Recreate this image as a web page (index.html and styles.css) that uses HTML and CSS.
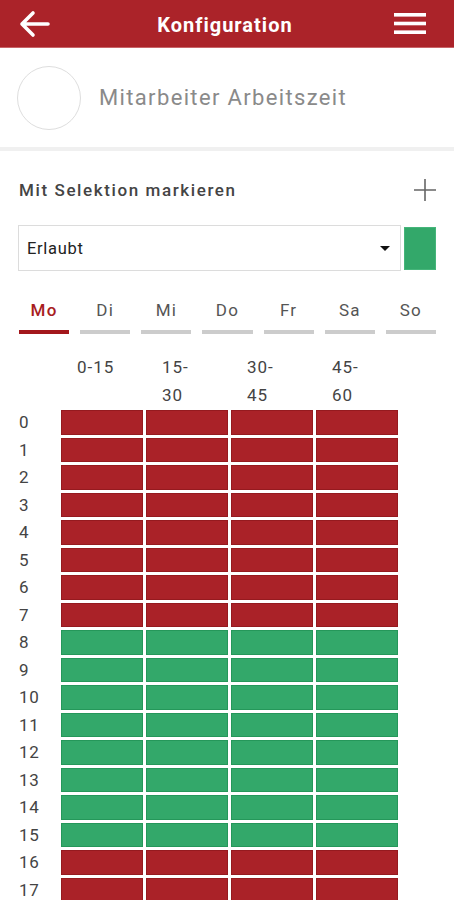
FILE: index.html
```html
<!DOCTYPE html>
<html lang="de">
<head>
    <meta charset="UTF-8">
    <meta name="viewport" content="width=device-width, initial-scale=1.0">
    <title>Konfiguration</title>
    <link rel="stylesheet" href="styles.css">
</head>
<body>
    <header class="topbar">
        <svg class="back" width="32" height="28" viewBox="0 0 32 28">
            <path d="M30 14H4M15 3L4 14l11 11" fill="none" stroke="#fff" stroke-width="3.6" stroke-linecap="round" stroke-linejoin="round"/>
        </svg>
        <h1 class="title">Konfiguration</h1>
        <svg class="menu" width="32" height="22" viewBox="0 0 32 22">
            <rect x="0" y="0" width="32" height="3.6" fill="#fff"/>
            <rect x="0" y="8.7" width="32" height="3.6" fill="#fff"/>
            <rect x="0" y="17.4" width="32" height="3.6" fill="#fff"/>
        </svg>
    </header>

    <div class="profile">
        <div class="avatar"></div>
        <span class="profile-name">Mitarbeiter Arbeitszeit</span>
    </div>

    <main class="content">
        <div class="mark-row">
            <span class="mark-title">Mit Selektion markieren</span>
            <svg class="plus" width="24" height="24" viewBox="0 0 24 24">
                <path d="M12 1v22M1 12h22" stroke="#666" stroke-width="1.6"/>
            </svg>
        </div>

        <div class="select-row">
            <div class="select">
                <span>Erlaubt</span>
                <span class="caret"></span>
            </div>
            <div class="swatch"></div>
        </div>

        <nav class="tabs">
            <div class="tab active">Mo</div>
            <div class="tab">Di</div>
            <div class="tab">Mi</div>
            <div class="tab">Do</div>
            <div class="tab">Fr</div>
            <div class="tab">Sa</div>
            <div class="tab">So</div>
        </nav>

        <div class="col-heads">
            <div class="col-head">0-15</div>
            <div class="col-head">15-<br>30</div>
            <div class="col-head">30-<br>45</div>
            <div class="col-head">45-<br>60</div>
        </div>

        <div class="grid">
            <div class="hour">0</div><div class="cell no"></div><div class="cell no"></div><div class="cell no"></div><div class="cell no"></div>
            <div class="hour">1</div><div class="cell no"></div><div class="cell no"></div><div class="cell no"></div><div class="cell no"></div>
            <div class="hour">2</div><div class="cell no"></div><div class="cell no"></div><div class="cell no"></div><div class="cell no"></div>
            <div class="hour">3</div><div class="cell no"></div><div class="cell no"></div><div class="cell no"></div><div class="cell no"></div>
            <div class="hour">4</div><div class="cell no"></div><div class="cell no"></div><div class="cell no"></div><div class="cell no"></div>
            <div class="hour">5</div><div class="cell no"></div><div class="cell no"></div><div class="cell no"></div><div class="cell no"></div>
            <div class="hour">6</div><div class="cell no"></div><div class="cell no"></div><div class="cell no"></div><div class="cell no"></div>
            <div class="hour">7</div><div class="cell no"></div><div class="cell no"></div><div class="cell no"></div><div class="cell no"></div>
            <div class="hour">8</div><div class="cell ok"></div><div class="cell ok"></div><div class="cell ok"></div><div class="cell ok"></div>
            <div class="hour">9</div><div class="cell ok"></div><div class="cell ok"></div><div class="cell ok"></div><div class="cell ok"></div>
            <div class="hour">10</div><div class="cell ok"></div><div class="cell ok"></div><div class="cell ok"></div><div class="cell ok"></div>
            <div class="hour">11</div><div class="cell ok"></div><div class="cell ok"></div><div class="cell ok"></div><div class="cell ok"></div>
            <div class="hour">12</div><div class="cell ok"></div><div class="cell ok"></div><div class="cell ok"></div><div class="cell ok"></div>
            <div class="hour">13</div><div class="cell ok"></div><div class="cell ok"></div><div class="cell ok"></div><div class="cell ok"></div>
            <div class="hour">14</div><div class="cell ok"></div><div class="cell ok"></div><div class="cell ok"></div><div class="cell ok"></div>
            <div class="hour">15</div><div class="cell ok"></div><div class="cell ok"></div><div class="cell ok"></div><div class="cell ok"></div>
            <div class="hour">16</div><div class="cell no"></div><div class="cell no"></div><div class="cell no"></div><div class="cell no"></div>
            <div class="hour">17</div><div class="cell no"></div><div class="cell no"></div><div class="cell no"></div><div class="cell no"></div>
            <div class="hour">18</div><div class="cell no"></div><div class="cell no"></div><div class="cell no"></div><div class="cell no"></div>
            <div class="hour">19</div><div class="cell no"></div><div class="cell no"></div><div class="cell no"></div><div class="cell no"></div>
            <div class="hour">20</div><div class="cell no"></div><div class="cell no"></div><div class="cell no"></div><div class="cell no"></div>
            <div class="hour">21</div><div class="cell no"></div><div class="cell no"></div><div class="cell no"></div><div class="cell no"></div>
            <div class="hour">22</div><div class="cell no"></div><div class="cell no"></div><div class="cell no"></div><div class="cell no"></div>
            <div class="hour">23</div><div class="cell no"></div><div class="cell no"></div><div class="cell no"></div><div class="cell no"></div>
        </div>
    </main>
</body>
</html>
```

FILE: styles.css
```css
body {
    margin: 0;
    background-color: #fff;
    font-family: Roboto, "Noto Sans", sans-serif;
    color: #444;
}

.topbar {
    display: flex;
    align-items: center;
    justify-content: space-between;
    height: 47px;
    padding: 0 28px 0 18px;
    background-color: #ab2329;
    border-bottom: 1px solid #c86468;
}

.title {
    margin: 2px 0 0 6px;
    color: #fff;
    font-size: 20px;
    font-weight: 700;
    letter-spacing: 1px;
}

.back {
    display: block;
}

.menu {
    display: block;
}

.profile {
    display: flex;
    align-items: center;
    height: 99px;
    padding-left: 17px;
    border-bottom: 4px solid #f0f0f0;
}

.avatar {
    width: 62px;
    height: 62px;
    border: 1px solid #dedede;
    border-radius: 50%;
}

.profile-name {
    margin-left: 18px;
    font-size: 22px;
    color: #8a8a8a;
    letter-spacing: 1.35px;
}

.content {
    padding: 0 18px 0 19px;
}

.mark-row {
    display: flex;
    align-items: center;
    justify-content: space-between;
    height: 26px;
    margin-top: 26px;
}

.mark-title {
    font-size: 17px;
    font-weight: 500;
    color: #444;
    letter-spacing: 1.6px;
}

.plus {
    display: block;
    margin-right: -1px;
}

.select-row {
    display: flex;
    align-items: center;
    margin-top: 22px;
    margin-left: -1px;
}

.select {
    display: flex;
    align-items: center;
    justify-content: space-between;
    width: 364px;
    height: 44px;
    padding: 0 10px 0 8px;
    border: 1px solid #dcdcdc;
    font-size: 16.5px;
    letter-spacing: 0.7px;
    color: #222;
}

.caret {
    width: 0;
    height: 0;
    border-left: 5px solid transparent;
    border-right: 5px solid transparent;
    border-top: 5px solid #111;
}

.swatch {
    width: 32px;
    height: 43px;
    margin-left: 3px;
    background-color: #33a86a;
    border: 1px solid #45b57a;
    box-sizing: border-box;
}

.tabs {
    display: grid;
    grid-template-columns: repeat(7, 1fr);
    column-gap: 11px;
    margin-top: 24px;
}

.tab {
    height: 30px;
    line-height: 30px;
    padding-bottom: 5px;
    text-align: center;
    font-size: 17px;
    letter-spacing: 1.2px;
    color: #555;
    border-bottom: 4px solid #cccccc;
}

.tab.active {
    color: #a81c21;
    font-weight: 500;
    border-bottom-color: #a3171c;
}

.col-heads {
    display: flex;
    gap: 3px;
    margin-top: 19px;
    padding-left: 42px;
}

.col-head {
    width: 82px;
    padding-left: 16px;
    box-sizing: border-box;
    font-size: 17px;
    line-height: 28px;
    color: #444;
    letter-spacing: 1px;
}

.grid {
    display: grid;
    grid-template-columns: 39px repeat(4, 82px);
    grid-auto-rows: 24.5px;
    column-gap: 3px;
    row-gap: 3px;
    margin-top: 1px;
}

.hour {
    margin-right: -3px;
    font-size: 17px;
    letter-spacing: 0.6px;
    line-height: 24.5px;
    color: #444;
}

.cell {
    box-sizing: border-box;
}

.cell.no {
    background-color: #aa2228;
    border: 1px solid #951a1f;
}

.cell.ok {
    background-color: #33a86a;
    border: 1px solid #25975a;
}
```
